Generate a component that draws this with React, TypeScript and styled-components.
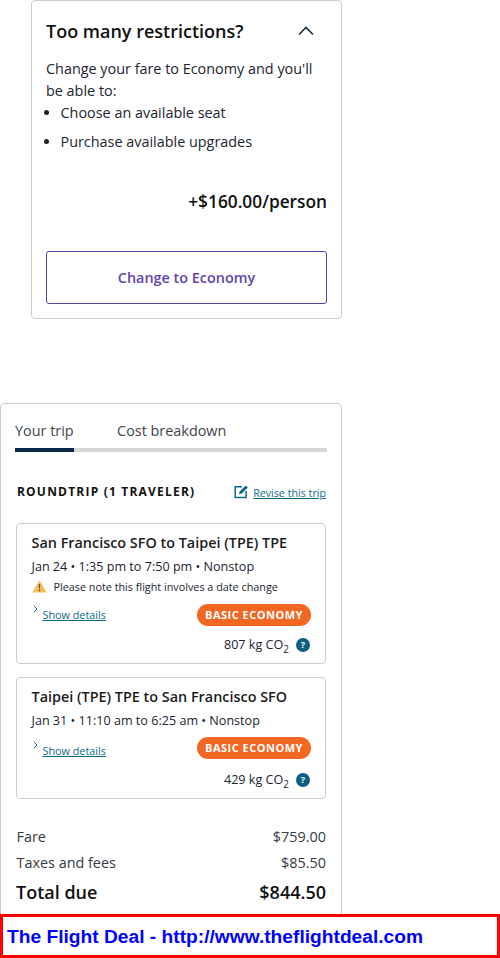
import styled, { createGlobalStyle } from 'styled-components';

const GlobalStyle = createGlobalStyle`
    html, body {
        margin: 0;
        padding: 0;
        height: 958px;
        overflow: hidden;
        background: #fff;
    }
    * {
        box-sizing: border-box;
    }
`;

const segments = [
    {
        title: 'San Francisco SFO to Taipei (TPE) TPE',
        time: 'Jan 24 • 1:35 pm to 7:50 pm • Nonstop',
        note: 'Please note this flight involves a date change',
        co2: '807 kg CO',
    },
    {
        title: 'Taipei (TPE) TPE to San Francisco SFO',
        time: 'Jan 31 • 11:10 am to 6:25 am • Nonstop',
        co2: '429 kg CO',
    },
];

const App = () => {
    return (
        <StyledPage>
            <GlobalStyle />
            <StyledUpsell>
                <StyledUpsellHeader>
                    <h2>Too many restrictions?</h2>
                    <svg width="16" height="10" viewBox="0 0 16 10" fill="none">
                        <path d="M1 8.5L8 1.5L15 8.5" stroke="#1b2f45" strokeWidth="1.6" />
                    </svg>
                </StyledUpsellHeader>
                <StyledUpsellText>Change your fare to Economy and you'll be able to:</StyledUpsellText>
                <StyledUpsellList>
                    <li>Choose an available seat</li>
                    <li>Purchase available upgrades</li>
                </StyledUpsellList>
                <StyledUpsellPrice>+$160.00/person</StyledUpsellPrice>
                <StyledUpsellButton>Change to Economy</StyledUpsellButton>
            </StyledUpsell>

            <StyledTrip>
                <StyledTabs>
                    <StyledTab $active>Your trip</StyledTab>
                    <StyledTab>Cost breakdown</StyledTab>
                </StyledTabs>

                <StyledTripHeader>
                    <h3>ROUNDTRIP (1 TRAVELER)</h3>
                    <StyledRevise>
                        <svg width="15" height="15" viewBox="0 0 15 15" fill="none">
                            <path d="M8 2.7H1.2V13.6H12.1V7" stroke="#0f6a85" strokeWidth="1.5" />
                            <path d="M5 10.2L5.6 7.4L11.6 1.4L13.9 3.5L7.8 9.6Z" fill="#0f6a85" />
                        </svg>
                        <a>Revise this trip</a>
                    </StyledRevise>
                </StyledTripHeader>

                {segments.map((segment) => (
                    <StyledSegment key={segment.title}>
                        <StyledSegmentTitle>{segment.title}</StyledSegmentTitle>
                        <StyledSegmentTime>{segment.time}</StyledSegmentTime>
                        {segment.note && (
                            <StyledNote>
                                <svg width="15" height="13" viewBox="0 0 15 13">
                                    <path d="M7.5 0.5L14.8 12.6H0.2Z" fill="#f5bd5c" />
                                    <path d="M6.8 4H8.2L8 8.6H7Z" fill="#6b4a12" />
                                    <circle cx="7.5" cy="10.3" r="0.9" fill="#6b4a12" />
                                </svg>
                                {segment.note}
                            </StyledNote>
                        )}
                        <StyledSegmentRow>
                            <StyledDetails $lowered={!segment.note}>
                                <svg width="5" height="8" viewBox="0 0 5 8" fill="none">
                                    <path d="M0.7 0.7L4 4L0.7 7.3" stroke="#0f6a85" strokeWidth="1" />
                                </svg>
                                <a>Show details</a>
                            </StyledDetails>
                            <StyledBadge>BASIC ECONOMY</StyledBadge>
                        </StyledSegmentRow>
                        <StyledCo2 $tall={!segment.note}>
                            <span>
                                {segment.co2}
                                <sub>2</sub>
                            </span>
                            <StyledHelp>?</StyledHelp>
                        </StyledCo2>
                    </StyledSegment>
                ))}

                <StyledCostRow>
                    <span>Fare</span>
                    <span>$759.00</span>
                </StyledCostRow>
                <StyledCostRow>
                    <span>Taxes and fees</span>
                    <span>$85.50</span>
                </StyledCostRow>
                <StyledTotalRow>
                    <span>Total due</span>
                    <span>$844.50</span>
                </StyledTotalRow>
            </StyledTrip>

            <StyledBanner>The Flight Deal - http://www.theflightdeal.com</StyledBanner>
        </StyledPage>
    );
};

const StyledPage = styled.main`
    position: relative;
    width: 500px;
    height: 958px;
    overflow: hidden;
    font-family: 'Open Sans', sans-serif;
    color: #1a2530;
`;

const StyledUpsell = styled.section`
    width: 311px;
    height: 319px;
    margin-left: 31px;
    padding: 17px 14px 0;
    border: 1px solid #ccc;
    border-radius: 4px;
`;

const StyledUpsellHeader = styled.div`
    display: flex;
    align-items: center;
    justify-content: space-between;
    height: 26px;
    padding-right: 13px;

    h2 {
        margin: 0;
        font-size: 18px;
        font-weight: 600;
        color: #111;
    }
`;

const StyledUpsellText = styled.p`
    margin: 14px 0 0;
    font-size: 14.4px;
    line-height: 22px;
`;

const StyledUpsellList = styled.ul`
    margin: 0;
    padding-left: 14.5px;
    font-size: 14.4px;
    line-height: 22px;

    li {
        margin-bottom: 7px;
    }
`;

const StyledUpsellPrice = styled.div`
    margin-top: 37px;
    font-size: 17.3px;
    font-weight: 600;
    line-height: 24px;
    text-align: right;
    color: #111;
`;

const StyledUpsellButton = styled.button`
    display: block;
    width: 281px;
    height: 53px;
    margin-top: 37px;
    background: #fff;
    border: 1px solid #5b41a8;
    border-radius: 3px;
    font-family: inherit;
    font-size: 14.4px;
    font-weight: 600;
    color: #6244b0;
`;

const StyledTrip = styled.section`
    width: 342px;
    height: 560px;
    margin-top: 84px;
    padding: 15px 14px 0;
    border: 1px solid #ccc;
    border-radius: 4px;
`;

const StyledTabs = styled.div`
    display: flex;
    gap: 43.5px;
    height: 33px;
    border-bottom: 4px solid #d6d6d4;
`;

const StyledTab = styled.div<{ $active?: boolean }>`
    height: 33px;
    font-size: 14.4px;
    line-height: 24px;
    color: #3d4650;
    border-bottom: 4px solid ${({ $active }) => ($active ? '#0b2a4a' : 'transparent')};
`;

const StyledTripHeader = styled.div`
    display: flex;
    align-items: center;
    justify-content: space-between;
    margin-top: 31px;
    padding-left: 2px;

    h3 {
        margin: 0;
        font-size: 12px;
        font-weight: 700;
        letter-spacing: 1.2px;
        color: #111;
    }
`;

const StyledRevise = styled.div`
    display: flex;
    align-items: center;
    gap: 4px;
    margin-right: 1px;

    a {
        margin-top: 2px;
        font-size: 10.7px;
        color: #0f6a85;
        text-decoration: underline;
    }
`;

const StyledSegment = styled.article`
    margin: 0 1px 13px;
    padding: 8px 14.5px 0;
    border: 1px solid #ccc;
    border-radius: 4px;

    &:first-of-type {
        margin-top: 23px;
    }
`;

const StyledSegmentTitle = styled.div`
    font-size: 14.4px;
    font-weight: 600;
    line-height: 22px;
    color: #1c1c1c;
`;

const StyledSegmentTime = styled.div`
    margin-top: 2px;
    font-size: 12.6px;
    line-height: 22px;
`;

const StyledNote = styled.div`
    display: flex;
    align-items: center;
    gap: 7px;
    height: 21px;
    padding-bottom: 4px;
    font-size: 10.8px;
`;

const StyledSegmentRow = styled.div`
    display: flex;
    align-items: flex-start;
    justify-content: space-between;
    margin-top: 5px;
    margin-right: -0.5px;
`;

const StyledDetails = styled.div<{ $lowered?: boolean }>`
    display: flex;
    align-items: flex-start;
    gap: 4.5px;
    margin-top: ${({ $lowered }) => ($lowered ? '4px' : '1px')};
    padding-left: 1.5px;

    a {
        margin-top: 2px;
        font-size: 10.8px;
        color: #0f6a85;
        text-decoration: underline;
    }
`;

const StyledBadge = styled.span`
    width: 114px;
    height: 22px;
    background: #f26722;
    border-radius: 11px;
    font-size: 11px;
    font-weight: 700;
    letter-spacing: 0.5px;
    line-height: 22px;
    text-align: center;
    color: #fff;
`;

const StyledCo2 = styled.div<{ $tall?: boolean }>`
    display: flex;
    align-items: center;
    justify-content: flex-end;
    gap: 7px;
    height: ${({ $tall }) => ($tall ? '39px' : '37px')};
    padding-top: ${({ $tall }) => ($tall ? '2px' : '0')};
    margin-right: 0.5px;
    font-size: 12.6px;

    sub {
        font-size: 10px;
        line-height: 0;
    }
`;

const StyledHelp = styled.span`
    display: flex;
    align-items: center;
    justify-content: center;
    width: 14px;
    height: 14px;
    background: #0f6080;
    border-radius: 50%;
    font-size: 9px;
    font-weight: 700;
    color: #fff;
`;

const StyledCostRow = styled.div`
    display: flex;
    justify-content: space-between;
    height: 26px;
    padding: 0 0 0 1.5px;
    margin-right: 1px;
    font-size: 14.4px;
    line-height: 26px;
    color: #333b44;

    article + & {
        margin-top: 25px;
    }
`;

const StyledTotalRow = styled.div`
    display: flex;
    justify-content: space-between;
    margin-top: 2px;
    margin-right: 1px;
    padding-left: 1px;
    font-size: 18px;
    font-weight: 600;
    line-height: 28px;
    color: #111;
`;

const StyledBanner = styled.div`
    position: absolute;
    left: 0;
    bottom: 0;
    width: 500px;
    height: 44px;
    padding-left: 4px;
    background: #fff;
    border: 3px solid #f00;
    font-family: 'Liberation Sans', sans-serif;
    font-size: 19.2px;
    font-weight: 700;
    line-height: 39px;
    color: #00f;
`;

export default App;
